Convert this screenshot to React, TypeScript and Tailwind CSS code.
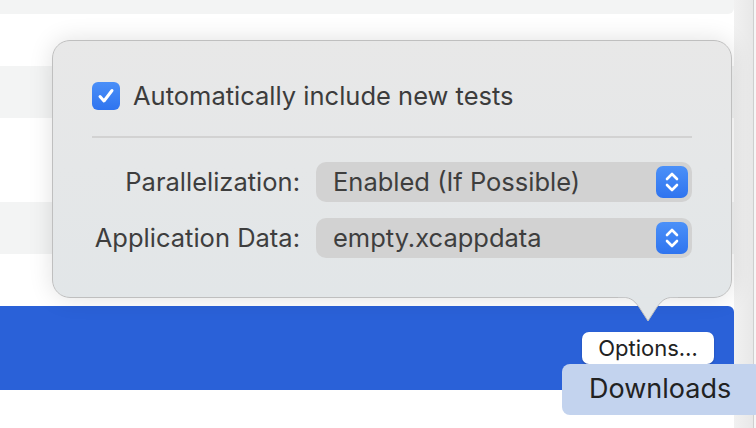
import React from "react";

function Stepper() {
  return (
    <div className="w-[32px] h-[32px] rounded-[7px] bg-gradient-to-b from-[#4b90f8] to-[#2f74ef] flex items-center justify-center shrink-0">
      <svg width="18" height="24" viewBox="0 0 18 24" fill="none" stroke="white" strokeWidth="2.6" strokeLinecap="round" strokeLinejoin="round">
        <path d="M4 9 L9 4 L14 9" />
        <path d="M4 15 L9 20 L14 15" />
      </svg>
    </div>
  );
}

function PopupRow({ label, value }: { label: string; value: string }) {
  return (
    <div className="flex items-center">
      <div className="w-[224px] text-right pr-[16px] text-[#3e3e3e] whitespace-nowrap">{label}</div>
      <div className="flex-1 h-[40px] rounded-[10px] bg-[#d2d2d2] flex items-center justify-between pl-[17px] pr-[4px]">
        <span className="text-[#3e3e3e]">{value}</span>
        <Stepper />
      </div>
    </div>
  );
}

export default function App() {
  return (
    <div
      className="relative w-[756px] h-[428px] overflow-hidden bg-white flex"
      style={{ fontFamily: "Inter, 'Noto Sans', sans-serif" }}
    >
      {/* list background */}
      <div className="w-[734px] flex flex-col">
        <div className="h-[14px] bg-[#f3f4f4] rounded-br-[6px]" />
        <div className="h-[52px]" />
        <div className="h-[52px] bg-[#f3f4f4]" />
        <div className="h-[84px]" />
        <div className="h-[52px] bg-[#f3f4f4]" />
        <div className="h-[52px]" />
        <div className="h-[84px] bg-[#2a61d8] rounded-tr-[6px] flex items-start justify-end pr-[20px] pt-[26px]">
          <div className="h-[32px] w-[132px] rounded-[7px] bg-white shadow-[0_1px_2px_rgba(0,0,0,0.25)] flex items-center justify-center text-[22px] text-[#222]">
            Options…
          </div>
        </div>
      </div>
      {/* right edge */}
      <div className="flex-1 flex">
        <div className="w-[19px] bg-gradient-to-r from-[#f1f1f1] to-[#e8e8e8]" />
        <div className="w-[1px] bg-[#cfcfcf]" />
        <div className="flex-1 bg-[#f6f6f6]" />
      </div>

      {/* popover */}
      <div className="absolute left-[52px] top-[40px] w-[680px] h-[258px]">
        <div className="h-full rounded-[18px] border border-[#bfbfbf] bg-gradient-to-b from-[#e8e8e8] to-[#e2e6e8] shadow-[0_0_24px_rgba(0,0,0,0.12)] px-[39px] pt-[41px] text-[25.5px]">
          <div className="flex items-center gap-[13px] h-[28px]">
            <div className="w-[28px] h-[28px] rounded-[6px] bg-gradient-to-b from-[#4a8ff8] to-[#2f74ef] flex items-center justify-center">
              <svg width="20" height="20" viewBox="0 0 20 20" fill="none" stroke="white" strokeWidth="3" strokeLinecap="round" strokeLinejoin="round">
                <path d="M4 10.5 L8 15 L16 4.5" />
              </svg>
            </div>
            <span className="text-[#3c3c3c]">Automatically include new tests</span>
          </div>
          <div className="mt-[26px] h-[2px] bg-[#d2d2d2]" />
          <div className="mt-[24px] flex flex-col gap-[16px]">
            <PopupRow label="Parallelization:" value="Enabled (If Possible)" />
            <PopupRow label="Application Data:" value="empty.xcappdata" />
          </div>
        </div>
        <svg className="absolute left-[566px] top-[256px]" width="60" height="27" viewBox="0 0 60 27">
          <path d="M0 1 C12 1 15 3 21 11 L30 25 L39 11 C45 3 48 1 60 1" fill="#e2e6e8" stroke="#bfbfbf" strokeWidth="1" />
          <rect x="0" y="0" width="60" height="1.2" fill="#e2e6e8" />
        </svg>
      </div>

      {/* tooltip */}
      <div className="absolute left-[562px] top-[364px] w-[200px] h-[51px] rounded-[8px] bg-[#c3d3ee] flex items-center pl-[27px] text-[27px] text-[#222]">
        Downloads
      </div>
    </div>
  );
}
